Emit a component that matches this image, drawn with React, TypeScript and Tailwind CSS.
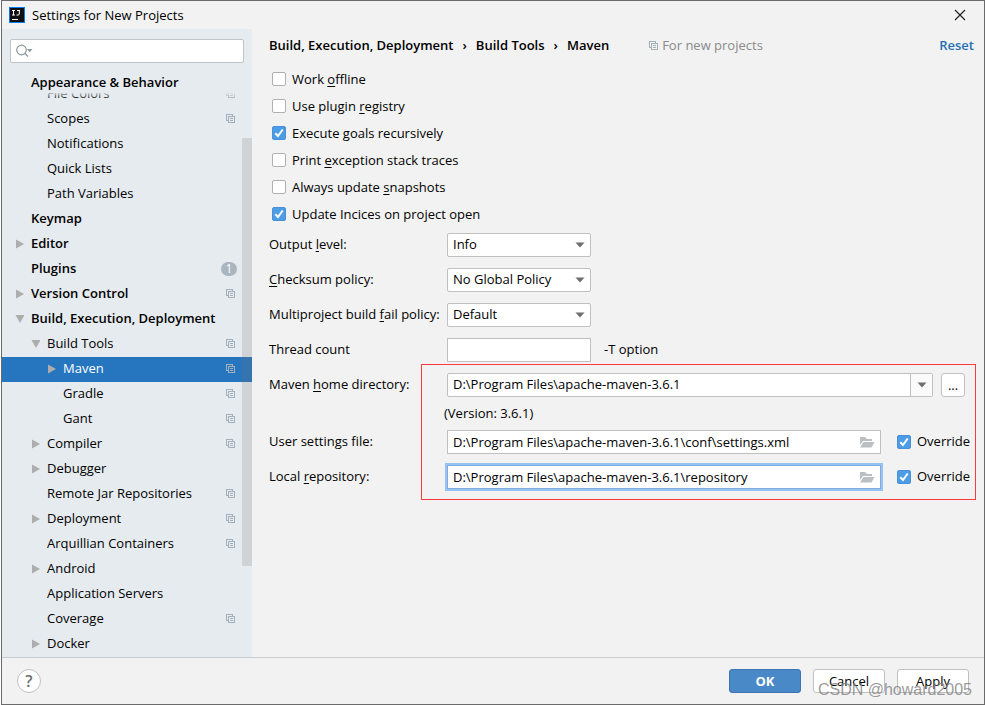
import React from 'react';
import clsx from 'clsx';

type TreeItem = {
  label: string;
  level: number;
  bold?: boolean;
  arrow?: 'right' | 'down';
  project?: boolean;
  badge?: string;
  selected?: boolean;
};

const treeItems: TreeItem[] = [
  { label: 'File Colors', level: 1, project: true },
  { label: 'Scopes', level: 1, project: true },
  { label: 'Notifications', level: 1 },
  { label: 'Quick Lists', level: 1 },
  { label: 'Path Variables', level: 1 },
  { label: 'Keymap', level: 0, bold: true },
  { label: 'Editor', level: 0, bold: true, arrow: 'right' },
  { label: 'Plugins', level: 0, bold: true, badge: '1' },
  { label: 'Version Control', level: 0, bold: true, arrow: 'right', project: true },
  { label: 'Build, Execution, Deployment', level: 0, bold: true, arrow: 'down' },
  { label: 'Build Tools', level: 1, arrow: 'down', project: true },
  { label: 'Maven', level: 2, arrow: 'right', project: true, selected: true },
  { label: 'Gradle', level: 2, project: true },
  { label: 'Gant', level: 2, project: true },
  { label: 'Compiler', level: 1, arrow: 'right', project: true },
  { label: 'Debugger', level: 1, arrow: 'right' },
  { label: 'Remote Jar Repositories', level: 1, project: true },
  { label: 'Deployment', level: 1, arrow: 'right', project: true },
  { label: 'Arquillian Containers', level: 1, project: true },
  { label: 'Android', level: 1, arrow: 'right' },
  { label: 'Application Servers', level: 1 },
  { label: 'Coverage', level: 1, project: true },
  { label: 'Docker', level: 1, arrow: 'right' },
];

const levelPadding = ['pl-3', 'pl-7', 'pl-11'];

// "&" marks the mnemonic letter
const Mnemonic = ({ text }: { text: string }) => {
  const [before, rest] = text.split('&');
  if (!rest) return <>{before}</>;
  return (
    <>
      {before}
      <span className="underline underline-offset-2">{rest[0]}</span>
      {rest.slice(1)}
    </>
  );
};

const ProjectIcon = ({ className }: { className?: string }) => (
  <svg viewBox="0 0 10 10" className={clsx('h-[10px] w-[10px] shrink-0', className)} fill="none" stroke="#a4b1ba" shapeRendering="crispEdges">
    <path d="M2 6.5H.5V.5H6.5V2M2.5 2.5H8.5V8.5H2.5ZM4 4.5H7M4 6.5H7" />
  </svg>
);

const TreeArrow = ({ direction }: { direction?: 'right' | 'down' }) => (
  <svg viewBox="0 0 10 10" className="h-[10px] w-[10px] shrink-0" fill="#adadad">
    {direction === 'right' && <path d="M2 .5L10 5L2 9.5Z" />}
    {direction === 'down' && <path d="M1.500 1H10.500L6 9Z" />}
  </svg>
);

const DropArrow = () => (
  <svg viewBox="0 0 10 6" className="h-[6px] w-[10px]" fill="#6e6e6e">
    <path d="M.5 .5H9.5L5 5.5Z" />
  </svg>
);

const FolderIcon = () => (
  <svg viewBox="0 0 16 12" className="h-3 w-4" fill="#b9bfc3">
    <path d="M1 9V1H6L8 3H13V5H4Z" />
    <path d="M4.500 6H15.500L12.500 11.500H1Z" />
  </svg>
);

const CheckBox = ({ label, checked }: { label: string; checked?: boolean }) => (
  <label className="flex items-center gap-1.5 whitespace-nowrap">
    <span className="relative h-[14px] w-[14px] shrink-0">
      <input
        type="checkbox"
        defaultChecked={checked}
        className="peer block h-[14px] w-[14px] appearance-none rounded-[2px] border border-[#b0b0b0] bg-white checked:border-[#4a90d9] checked:bg-[#4d9de6]"
      />
      <svg viewBox="0 0 14 14" className="pointer-events-none absolute inset-0 hidden peer-checked:block" fill="none" stroke="white" strokeWidth="2">
        <path d="M3.300 7.200L6 10L10.700 3.500" />
      </svg>
    </span>
    <span>
      <Mnemonic text={label} />
    </span>
  </label>
);

const SelectRow = ({ id, label, value }: { id: string; label: string; value: string }) => (
  <div className="flex h-6 items-center">
    <label htmlFor={id} className="w-[178px] shrink-0">
      <Mnemonic text={label} />
    </label>
    <div className="relative w-36">
      <select id={id} className="block h-6 w-full appearance-none rounded-[2px] border border-[#c0c0c0] bg-white pl-[5px]">
        <option>{value}</option>
      </select>
      <span className="pointer-events-none absolute inset-y-0 right-1.5 flex items-center">
        <DropArrow />
      </span>
    </div>
  </div>
);

const PathRow = ({ id, label, value, focused }: { id: string; label: string; value: string; focused?: boolean }) => (
  <div className="flex h-6 items-center">
    <label htmlFor={id} className="w-[178px] shrink-0">
      <Mnemonic text={label} />
    </label>
    <div
      className={clsx(
        'flex h-6 flex-1 items-center border bg-white pr-[5px]',
        focused ? 'border-[#7eaee0] ring-2 ring-[#97c3f3]' : 'border-[#c0c0c0]'
      )}
    >
      <input id={id} type="text" defaultValue={value} className="h-full min-w-0 flex-1 px-[5px] outline-none" />
      <button type="button" aria-label="Browse">
        <FolderIcon />
      </button>
    </div>
    <div className="ml-4 w-[79px]">
      <CheckBox label="Override" checked />
    </div>
  </div>
);

const TitleBar = () => (
  <header className="flex h-7 shrink-0 items-center pl-[7px] pr-[18px]">
    <svg viewBox="0 0 16 16" className="h-4 w-4">
      <rect width="16" height="16" fill="#087cfa" />
      <rect x="1" y="1" width="14" height="14" fill="#101010" />
      <path d="M3 3.500H6M4.500 3.500V8M3 8H6M8 3.500H11M10.300 3.500V7Q10.300 8 9.200 8H7.500M3 12.500H9" stroke="white" fill="none" />
    </svg>
    <h1 className="ml-[7px] flex-1 pt-[1px]">Settings for New Projects</h1>
    <button type="button" aria-label="Close">
      <svg viewBox="0 0 12 12" className="h-3 w-3" stroke="#222" strokeWidth="1.200">
        <path d="M1 1L11 11M11 1L1 11" />
      </svg>
    </button>
  </header>
);

const Sidebar = () => (
  <aside className="relative flex w-[250px] shrink-0 flex-col bg-[#e6ebef]">
    <div className="mx-2 mt-[10px] flex h-6 items-center rounded-[2px] border border-[#c0c4c6] bg-white pl-1">
      <svg viewBox="0 0 18 14" className="h-[14px] w-[18px] shrink-0" fill="none" stroke="#8d989f" strokeWidth="1.200">
        <circle cx="6.500" cy="6" r="4.800" />
        <path d="M10 9.500L13 12.500" />
        <path d="M12 5H17.500L14.700 8.300Z" fill="#8d989f" stroke="none" />
      </svg>
      <input type="text" aria-label="Search settings" className="min-w-0 flex-1 outline-none" />
    </div>
    <div className="flex h-[30px] shrink-0 items-end pb-[1px] pl-[29px] font-semibold">
      <span className="leading-[20px]">Appearance &amp; Behavior</span>
    </div>
    <nav className="relative min-h-0 flex-1 overflow-hidden">
      <ul className="-mt-[11px]">
        {treeItems.map((item) => (
          <li key={item.label}>
            <a
              href="#"
              className={clsx(
                'flex h-[25px] items-center whitespace-nowrap pb-[1px]',
                levelPadding[item.level],
                item.bold && 'font-semibold',
                item.selected && 'bg-[#2675bf] text-white'
              )}
            >
              <TreeArrow direction={item.arrow} />
              <span className="ml-[7px] flex-1">{item.label}</span>
              {item.badge && (
                <span className="mr-[15px] flex h-[14px] w-4 items-center justify-center rounded-full bg-[#a9b5bf] text-[12px] font-normal text-white">
                  {item.badge}
                </span>
              )}
              {item.project && <ProjectIcon className="mr-4" />}
            </a>
          </li>
        ))}
      </ul>
      <div className="absolute inset-x-0 top-0 h-1.5 bg-linear-to-b from-[#e6ebef]/80 to-transparent" />
      <div className="absolute right-0 top-[45px] h-[428px] w-[10px] bg-[#737373]/20" />
    </nav>
  </aside>
);

const MavenSettings = () => (
  <main className="min-w-0 flex-1 pl-[17px] pr-2">
    <div className="mt-[5px] flex h-6 items-center whitespace-nowrap pr-[2px]">
      <div className="flex gap-[9px] font-semibold">
        <span>Build, Execution, Deployment</span>
        <span>›</span>
        <span>Build Tools</span>
        <span>›</span>
        <span>Maven</span>
      </div>
      <div className="ml-10 flex flex-1 items-center gap-[3px] text-[#8a8a8a]">
        <ProjectIcon />
        For new projects
      </div>
      <a href="#" className="font-semibold text-[#2470b3]">
        Reset
      </a>
    </div>

    <div className="mt-[11px] flex flex-col gap-[7px] pl-[3px] leading-[20px]">
      <CheckBox label="Work &offline" />
      <CheckBox label="Use plugin &registry" />
      <CheckBox label="Execute &goals recursively" checked />
      <CheckBox label="Print &exception stack traces" />
      <CheckBox label="Always update &snapshots" />
      <CheckBox label="Update Incices on project open" checked />
    </div>

    <div className="mt-[9px] flex flex-col gap-[11px]">
      <SelectRow id="output" label="Output &level:" value="Info" />
      <SelectRow id="checksum" label="&Checksum policy:" value="No Global Policy" />
      <SelectRow id="fail" label="Multiproject build &fail policy:" value="Default" />
      <div className="flex h-6 items-center">
        <label htmlFor="threads" className="w-[178px] shrink-0">
          Thread count
        </label>
        <input id="threads" type="text" className="h-6 w-36 border border-[#c0c0c0] bg-white px-[5px]" />
        <span className="ml-[13px]">-T option</span>
      </div>

      <div className="relative">
        <div className="flex h-6 items-center pr-[11px]">
          <label htmlFor="home" className="w-[178px] shrink-0">
            <Mnemonic text="Maven &home directory:" />
          </label>
          <div className="flex h-6 min-w-0 flex-1 rounded-[2px] border border-[#c0c0c0] bg-white">
            <input id="home" type="text" defaultValue="D:\Program Files\apache-maven-3.6.1" className="min-w-0 flex-1 px-[5px] outline-none" />
            <button type="button" aria-label="Show paths" className="flex w-[22px] items-center justify-center border-l border-[#c0c0c0] bg-[#fafafa]">
              <DropArrow />
            </button>
          </div>
          <button type="button" className="ml-2 h-6 w-6 rounded-[3px] border border-[#c0c0c0] bg-white leading-[20px]">
            ...
          </button>
        </div>
        <p className="mb-[7px] mt-[7px] pl-[175px] leading-[19px]">(Version: 3.6.1)</p>
        <div className="flex flex-col gap-[11px]">
          <PathRow id="settings" label="User settings file:" value="D:\Program Files\apache-maven-3.6.1\conf\settings.xml" />
          <PathRow id="repository" label="Local &repository:" value="D:\Program Files\apache-maven-3.6.1\repository" focused />
        </div>
        <div className="pointer-events-none absolute -bottom-[11px] -top-[9px] left-[152px] right-0 border border-[#fa3c3c]" />
      </div>
    </div>
  </main>
);

const Footer = () => (
  <footer className="relative flex h-[47px] shrink-0 items-center border-t border-[#c9cccf] pl-[15px] pr-[15px]">
    <button type="button" aria-label="Help" className="flex h-6 w-6 items-center justify-center rounded-full border border-[#c0c0c0] bg-white text-[16px] font-semibold text-[#6e6e6e]">
      ?
    </button>
    <div className="ml-auto flex gap-3">
      <button type="button" className="h-6 w-[72px] rounded-[3px] border border-[#3d75b1] bg-[#4a89c8] pt-[1px] font-bold text-white">
        OK
      </button>
      <button type="button" className="h-6 w-[72px] rounded-[3px] border border-[#c0c0c0] bg-white pt-[1px]">
        Cancel
      </button>
      <button type="button" className="h-6 w-[72px] rounded-[3px] border border-[#c0c0c0] bg-white pt-[1px]">
        Apply
      </button>
    </div>
    <span className="pointer-events-none absolute bottom-1 right-3 font-['Liberation_Sans',sans-serif] text-[16px] leading-[20px] text-[#808080]/80">
      CSDN @howard2005
    </span>
  </footer>
);

const App = () => {
  return (
    <div className="h-screen min-h-[600px] bg-white px-[1px] font-['Open_Sans',sans-serif] text-[13px] text-black">
      <div className="flex h-full flex-col border border-[#6b6b6b] bg-[#f2f2f2]">
        <TitleBar />
        <div className="flex min-h-0 flex-1">
          <Sidebar />
          <MavenSettings />
        </div>
        <Footer />
      </div>
    </div>
  );
};

export default App;
